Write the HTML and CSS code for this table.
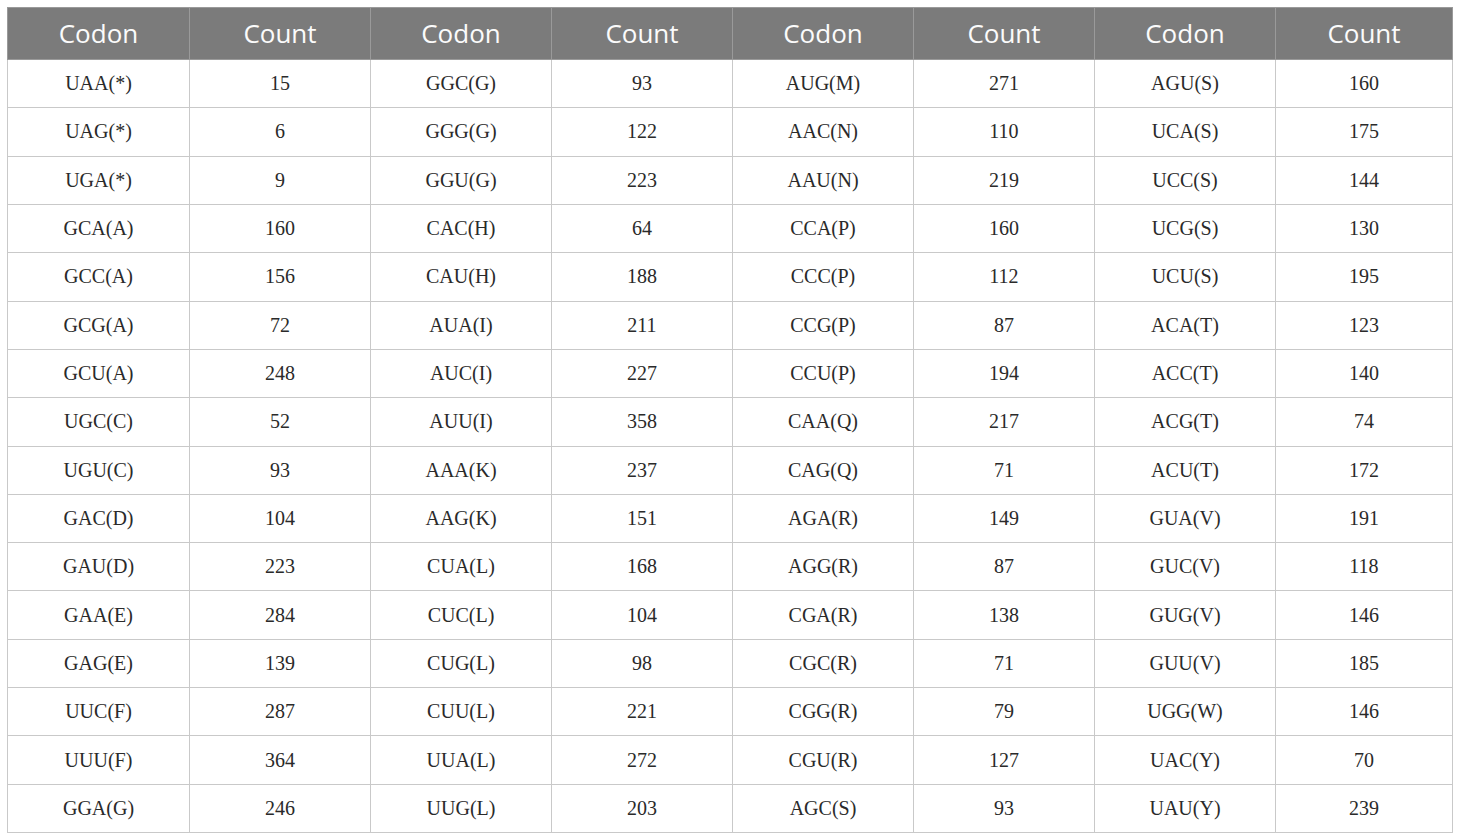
FILE: index.html
```html
<!DOCTYPE html>
<html>
<head>
<meta charset="utf-8">
<link rel="stylesheet" href="styles.css">
</head>
<body>
<table class="codon-table">
<colgroup>
<col class="c1"><col class="c"><col class="c"><col class="c"><col class="c"><col class="c"><col class="c"><col class="c8">
</colgroup>
<thead>
<tr><th>Codon</th><th>Count</th><th>Codon</th><th>Count</th><th>Codon</th><th>Count</th><th>Codon</th><th>Count</th></tr>
</thead>
<tbody>
<tr><td>UAA(*)</td><td>15</td><td>GGC(G)</td><td>93</td><td>AUG(M)</td><td>271</td><td>AGU(S)</td><td>160</td></tr>
<tr><td>UAG(*)</td><td>6</td><td>GGG(G)</td><td>122</td><td>AAC(N)</td><td>110</td><td>UCA(S)</td><td>175</td></tr>
<tr><td>UGA(*)</td><td>9</td><td>GGU(G)</td><td>223</td><td>AAU(N)</td><td>219</td><td>UCC(S)</td><td>144</td></tr>
<tr><td>GCA(A)</td><td>160</td><td>CAC(H)</td><td>64</td><td>CCA(P)</td><td>160</td><td>UCG(S)</td><td>130</td></tr>
<tr><td>GCC(A)</td><td>156</td><td>CAU(H)</td><td>188</td><td>CCC(P)</td><td>112</td><td>UCU(S)</td><td>195</td></tr>
<tr><td>GCG(A)</td><td>72</td><td>AUA(I)</td><td>211</td><td>CCG(P)</td><td>87</td><td>ACA(T)</td><td>123</td></tr>
<tr><td>GCU(A)</td><td>248</td><td>AUC(I)</td><td>227</td><td>CCU(P)</td><td>194</td><td>ACC(T)</td><td>140</td></tr>
<tr><td>UGC(C)</td><td>52</td><td>AUU(I)</td><td>358</td><td>CAA(Q)</td><td>217</td><td>ACG(T)</td><td>74</td></tr>
<tr><td>UGU(C)</td><td>93</td><td>AAA(K)</td><td>237</td><td>CAG(Q)</td><td>71</td><td>ACU(T)</td><td>172</td></tr>
<tr><td>GAC(D)</td><td>104</td><td>AAG(K)</td><td>151</td><td>AGA(R)</td><td>149</td><td>GUA(V)</td><td>191</td></tr>
<tr><td>GAU(D)</td><td>223</td><td>CUA(L)</td><td>168</td><td>AGG(R)</td><td>87</td><td>GUC(V)</td><td>118</td></tr>
<tr><td>GAA(E)</td><td>284</td><td>CUC(L)</td><td>104</td><td>CGA(R)</td><td>138</td><td>GUG(V)</td><td>146</td></tr>
<tr><td>GAG(E)</td><td>139</td><td>CUG(L)</td><td>98</td><td>CGC(R)</td><td>71</td><td>GUU(V)</td><td>185</td></tr>
<tr><td>UUC(F)</td><td>287</td><td>CUU(L)</td><td>221</td><td>CGG(R)</td><td>79</td><td>UGG(W)</td><td>146</td></tr>
<tr><td>UUU(F)</td><td>364</td><td>UUA(L)</td><td>272</td><td>CGU(R)</td><td>127</td><td>UAC(Y)</td><td>70</td></tr>
<tr><td>GGA(G)</td><td>246</td><td>UUG(L)</td><td>203</td><td>AGC(S)</td><td>93</td><td>UAU(Y)</td><td>239</td></tr>
</tbody>
</table>
</body>
</html>
```
FILE: styles.css
```css
html, body {
  margin: 0;
  padding: 0;
  background: #ffffff;
}
body {
  padding: 7px;
}
.codon-table {
  border-collapse: collapse;
  table-layout: fixed;
  width: 1445px;
  height: 826px;
}
.codon-table col.c1 { width: 182px; }
.codon-table col.c { width: 181px; }
.codon-table col.c8 { width: 177px; }
.codon-table th,
.codon-table td {
  border: 1px solid #c9c9c9;
  text-align: center;
  vertical-align: middle;
  padding: 0;
}
.codon-table thead tr { height: 52px; }
.codon-table th {
  background: #7b7b7b;
  color: #fbfbfb;
  font-family: "Open Sans", "Liberation Sans", sans-serif;
  font-weight: 400;
  font-size: 26px;
  line-height: 1;
  padding-bottom: 2px;
  border-color: #9a9a9a;
}
.codon-table td {
  color: #2a2a2a;
  font-family: "Liberation Serif", "Times New Roman", serif;
  font-size: 20px;
}
```
